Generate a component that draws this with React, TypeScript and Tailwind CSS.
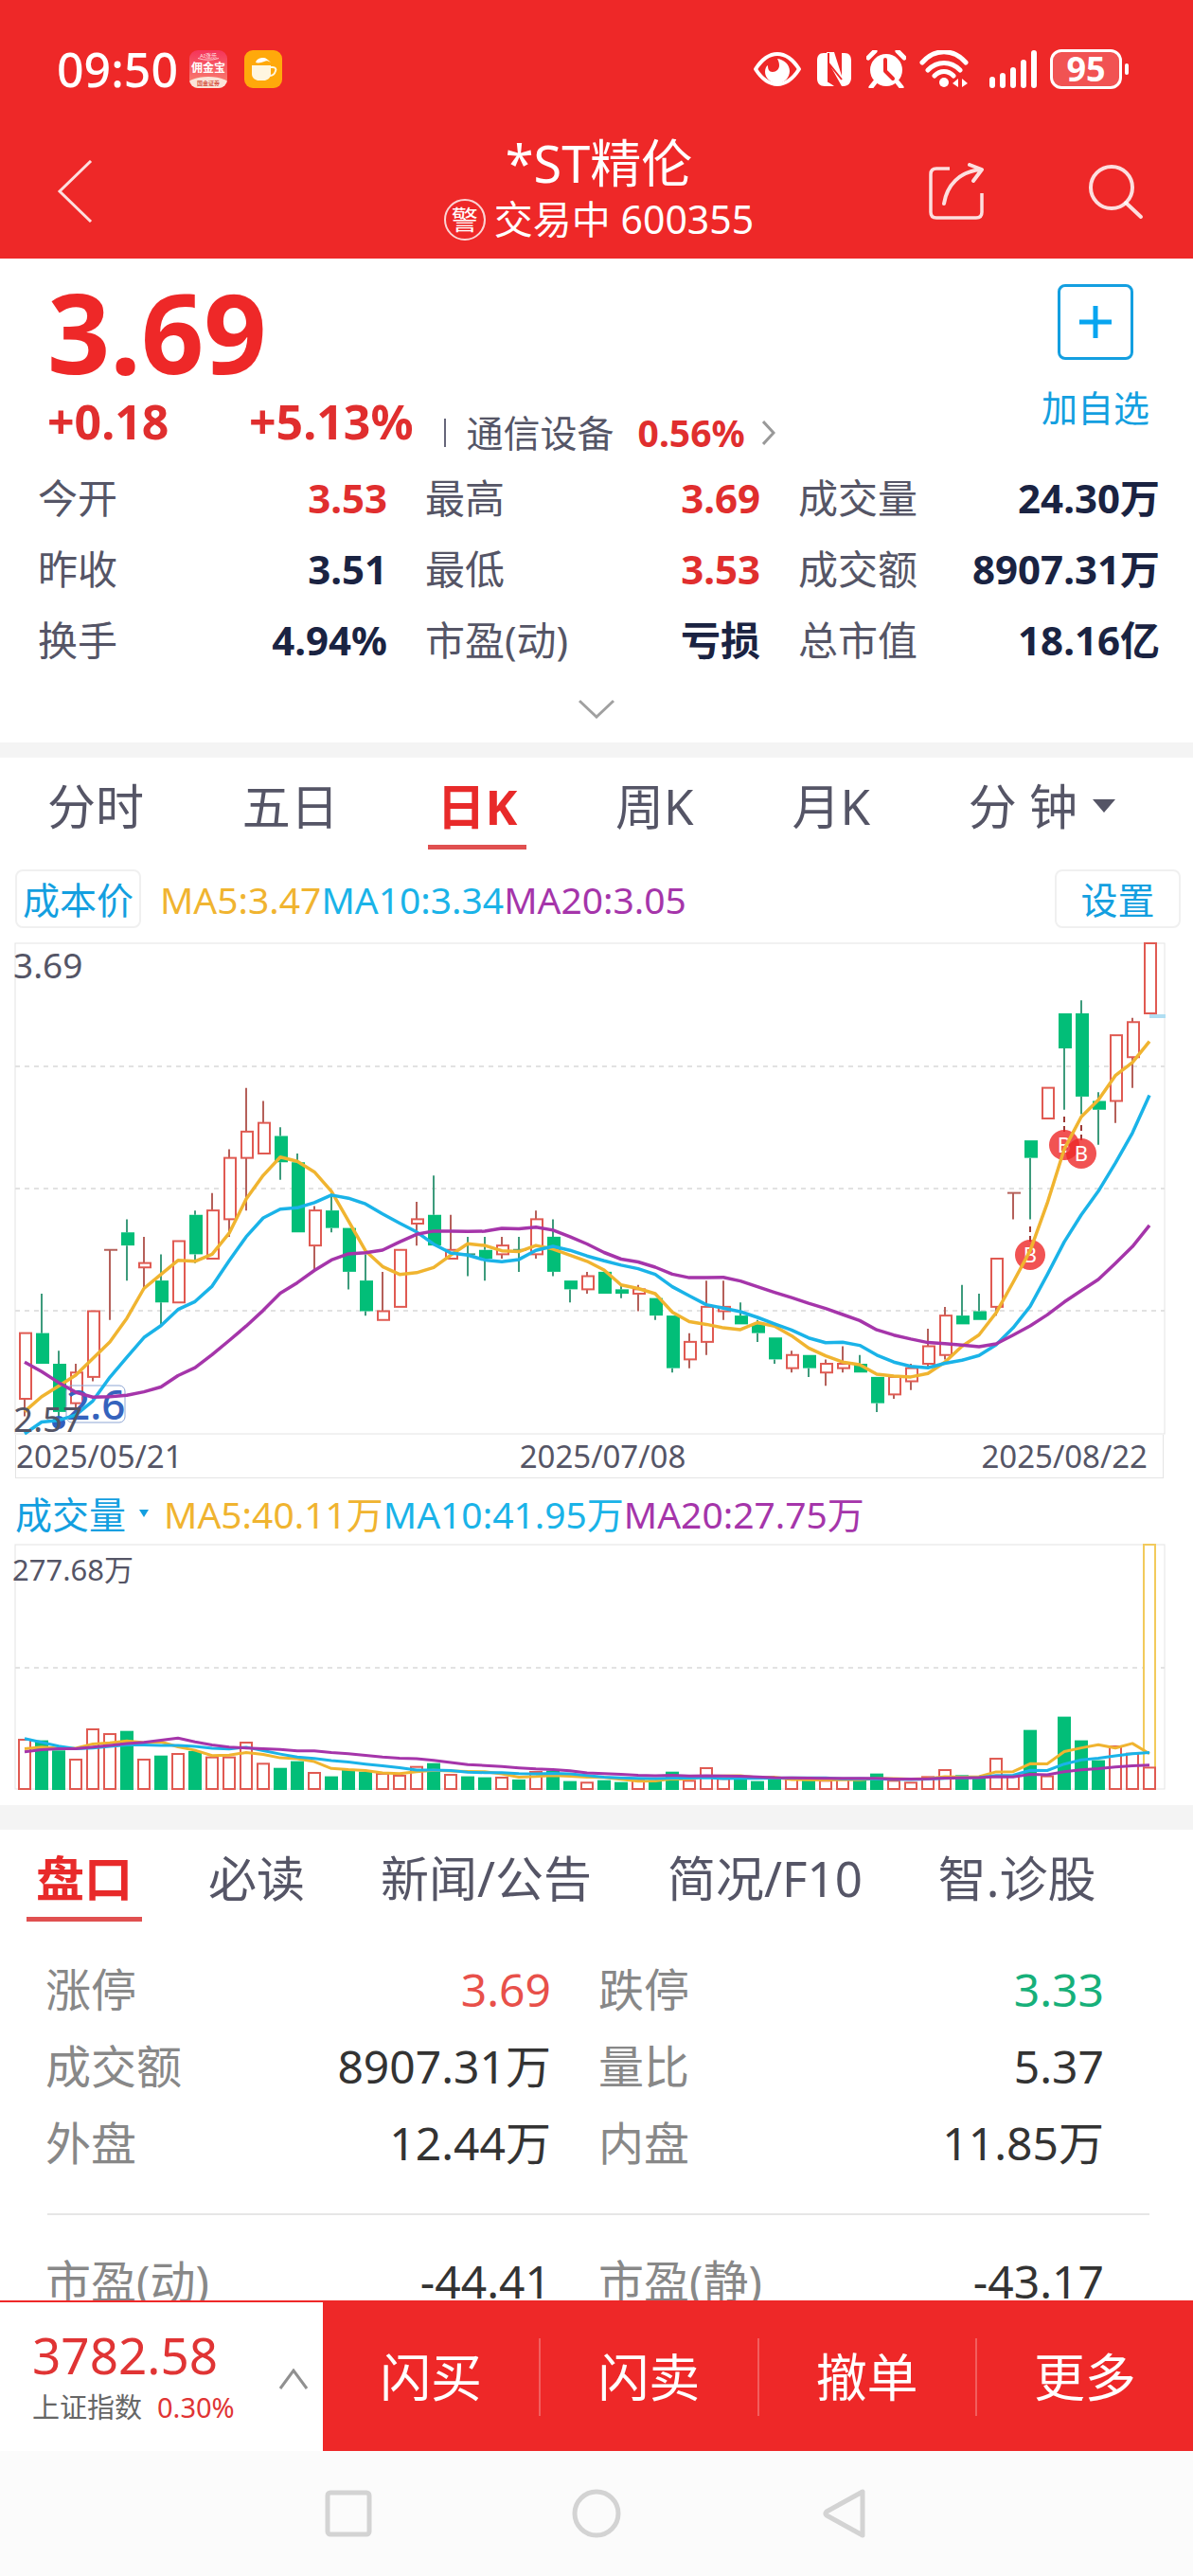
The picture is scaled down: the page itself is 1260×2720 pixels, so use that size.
import { useState } from 'react';
import clsx from 'clsx';

// [open, high, low, close, volume], prices in cents, volume in 万手
type Candle = [number, number, number, number, number];

const CANDLES: Candle[] = [
  [265, 280, 261, 280, 56.0], [280, 289, 273, 273, 55.3], [273, 276, 260, 262, 43.8],
  [264, 273, 263, 271, 33.4], [270, 285, 269, 285, 67.8], [299, 299, 283, 299, 62.4],
  [303, 306, 292, 300, 66.0], [295, 302, 290, 296, 33.4], [292, 298, 282, 287, 38.0],
  [287, 301, 287, 301, 39.8], [307, 308, 296, 298, 43.1], [297, 312, 297, 308, 35.9],
  [306, 322, 302, 320, 35.9], [320, 336, 308, 326, 52.7], [321, 333, 321, 328, 28.7],
  [325, 327, 315, 319, 24.0], [319, 321, 303, 303, 31.6], [300, 309, 294, 308, 18.3],
  [308, 312, 303, 304, 14.4], [304, 304, 290, 294, 21.5], [292, 298, 284, 285, 19.7],
  [283, 294, 283, 285, 17.2], [286, 299, 286, 299, 15.1], [305, 310, 300, 306, 25.1],
  [307, 316, 300, 300, 29.4], [297, 307, 297, 299, 16.1], [298, 302, 293, 298, 14.4],
  [299, 302, 292, 297, 13.3], [298, 302, 297, 300, 12.9], [299, 302, 294, 299, 10.8],
  [298, 308, 297, 306, 19.4], [302, 306, 293, 294, 20.8], [292, 292, 287, 290, 9.0],
  [290, 294, 289, 293, 7.2], [294, 294, 289, 289, 10.0], [290, 291, 288, 289, 7.9],
  [289, 291, 285, 290, 10.0], [288, 288, 283, 284, 10.0], [284, 284, 271, 272, 19.7],
  [274, 280, 272, 278, 9.3], [278, 292, 275, 286, 23.7], [285, 292, 283, 286, 11.5],
  [284, 287, 282, 282, 10.8], [282, 283, 278, 280, 9.0], [279, 279, 273, 274, 11.5],
  [272, 276, 271, 275, 10.8], [275, 275, 270, 272, 10.0], [271, 274, 268, 273, 9.3],
  [272, 277, 271, 273, 10.8], [273, 275, 271, 271, 11.5], [270, 270, 262, 264, 17.6],
  [266, 270, 265, 270, 9.3], [269, 273, 267, 272, 7.2], [273, 281, 272, 277, 13.6],
  [275, 286, 274, 284, 21.5], [284, 291, 282, 282, 15.8], [285, 289, 283, 283, 12.2],
  [286, 297, 284, 297, 34.4], [312, 312, 306, 312, 14.4], [324, 324, 306, 320, 67.1],
  [329, 336, 329, 336, 14.4], [353, 353, 331, 345, 82.2], [353, 356, 330, 334, 55.3],
  [333, 335, 323, 331, 32.7], [333, 348, 328, 348, 48.4], [343, 352, 336, 351, 40.2],
  [353, 369, 353, 369, 24.3],
];

// averages for the first days, whose history lies before the visible window
const PRICE_SEED: Record<number, number[]> = {
  5: [262.1, 265.5, 267.9, 270.4],
  10: [257, 259.7, 260.1, 261.3, 264.5, 269.9, 274.5, 279, 281.7],
  20: [273.4, 271.2, 268.7, 266.5, 265.4, 265.5, 265.8, 266.6, 267.7, 270.3, 272.1, 275.1, 278.3, 281.6, 285.2, 289.1, 291.5, 294.3, 296.7],
};
const VOLUME_SEED: Record<number, number[]> = {
  5: [45.9, 47.7, 46.3, 46.3],
  10: [57.4, 53.1, 48.8, 45.9, 46.6, 48.4, 50.2, 50.2, 49.5],
  20: [42.3, 44.8, 45.9, 45.9, 47.7, 49.5, 51.7, 53.1, 55.3, 57.8, 53.5, 49.9, 47.7, 46.6, 45.9, 44.9, 43.4, 43.4, 41.3],
};

const LINES = [
  { period: 5, color: '#f0b430' },
  { period: 10, color: '#1ab3e8' },
  { period: 20, color: '#a535aa' },
];

const UP = '#e05a52';
const DOWN = '#02be78';

const barX = (i: number) => 26 + i * 18;

function isUp(i: number) {
  const [open, , , close] = CANDLES[i];
  if (open !== close) return close > open;
  return i === 0 || close >= CANDLES[i - 1][3];
}

function average(values: number[], seed: number[], period: number) {
  return values.map((_, i) => {
    if (i < period - 1) return seed[i];
    return values.slice(i - period + 1, i + 1).reduce((a, b) => a + b, 0) / period;
  });
}

const toPoints = (values: number[], y: (v: number) => number) =>
  values.map((v, i) => `${barX(i)},${y(v).toFixed(1)}`).join(' ');

function BuyMark({ index, cy }: { index: number; cy: number }) {
  const x = barX(index);
  return (
    <g>
      <line x1={x} x2={x} y1={cy - 30} y2={cy - 14} stroke="#9c3a36" strokeWidth="2" strokeDasharray="6 4" />
      <circle cx={x} cy={cy} r="16" fill="#ee2828" fillOpacity="0.8" />
      <text x={x} y={cy + 8} fontSize="22" fill="#fff" textAnchor="middle">B</text>
    </g>
  );
}

function PriceChart() {
  const y = (cents: number) => 6 + (369 - cents) * 4.625;
  const closes = CANDLES.map(c => c[3]);

  return (
    <svg viewBox="0 0 1260 525" className="mt-[10px] block w-full" role="img" aria-label="日K线图">
      <rect x="16" y="6" width="1214" height="518" fill="none" stroke="#e4e4e4" strokeWidth="1" />
      {[136, 265, 394].map(gy => (
        <line key={gy} x1="16" x2="1230" y1={gy} y2={gy} stroke="#e2e2e2" strokeWidth="2" strokeDasharray="5 5" />
      ))}
      <line x1="1214" x2="1231" y1="83" y2="83" stroke="#b0def2" strokeWidth="4" />

      {CANDLES.map(([open, high, low, close], i) => {
        const x = barX(i);
        const top = y(Math.max(open, close));
        const bottom = y(Math.min(open, close));
        const up = isUp(i);
        const wick = up ? '#b5605a' : '#3d9b7c';
        return (
          <g key={i}>
            <line x1={x} x2={x} y1={y(high)} y2={top} stroke={wick} strokeWidth="2" />
            <line x1={x} x2={x} y1={bottom} y2={y(low)} stroke={wick} strokeWidth="2" />
            {open === close ? (
              <line x1={x - 6} x2={x + 8} y1={top} y2={top} stroke={wick} strokeWidth="2" />
            ) : up ? (
              <rect x={x - 5} y={top} width="12" height={bottom - top} fill="#fff" stroke={UP} strokeWidth="2" />
            ) : (
              <rect x={x - 6} y={top} width="14" height={bottom - top} fill={DOWN} />
            )}
          </g>
        );
      })}

      <BuyMark index={59} cy={335} />
      <BuyMark index={61} cy={219} />
      <BuyMark index={62} cy={228} />

      <circle cx="62" cy="512" r="7" fill="#2e5fc0" />
      <rect x="70" y="473" width="62" height="39" rx="6" fill="none" stroke="#8ea6d4" strokeWidth="1" />
      <text x="70" y="509" fontSize="44" fontWeight="500" fill="#3563bd">2.6</text>

      {LINES.map(({ period, color }) => (
        <polyline
          key={period}
          points={toPoints(average(closes, PRICE_SEED[period], period), y)}
          fill="none" stroke={color} strokeWidth="3.500" strokeLinejoin="round"
        />
      ))}

      <text x="14" y="43" fontSize="37" fill="#555566">3.69</text>
      <text x="14" y="522" fontSize="37" fill="#555566">2.57</text>
    </svg>
  );
}

function VolumeChart() {
  const base = 262;
  const y = (v: number) => base - (v / 277.68) * 258;
  const volumes = CANDLES.map(c => c[4]);
  const lastX = barX(CANDLES.length - 1);

  return (
    <svg viewBox="0 0 1260 264" className="block w-full" role="img" aria-label="成交量图">
      <rect x="16" y="4" width="1214" height="258" fill="none" stroke="#e4e4e4" strokeWidth="1" />
      <line x1="16" x2="1230" y1="134" y2="134" stroke="#e2e2e2" strokeWidth="2" strokeDasharray="5 5" />
      <rect x={lastX - 6} y="4" width="12" height="258" fill="#fff" stroke="#f2ca5c" strokeWidth="2" />
      {volumes.map((v, i) => (
        isUp(i)
          ? <rect key={i} x={barX(i) - 6} y={y(v)} width="12" height={base - y(v)} fill="#fff" stroke={UP} strokeWidth="2" />
          : <rect key={i} x={barX(i) - 7} y={y(v)} width="14" height={base - y(v) + 1} fill={DOWN} />
      ))}
      {LINES.map(({ period, color }) => (
        <polyline
          key={period}
          points={toPoints(average(volumes, VOLUME_SEED[period], period), y)}
          fill="none" stroke={color} strokeWidth="3" strokeLinejoin="round"
        />
      ))}
      <text x="13" y="42" fontSize="31" fill="#555566">277.68万</text>
    </svg>
  );
}

function StatusBar() {
  return (
    <div className="flex h-[142px] items-center pl-[60px] pr-[68px] pt-1">
      <span className="w-[140px] text-[50px] font-medium leading-none">09:50</span>
      <svg viewBox="0 0 40 40" className="size-10">
        <defs>
          <linearGradient id="promo" x1="0" y1="0" x2="0" y2="1">
            <stop offset="0" stopColor="#f5345a" />
            <stop offset="1" stopColor="#f98a72" />
          </linearGradient>
          <clipPath id="promo-clip"><rect width="40" height="40" rx="9" /></clipPath>
        </defs>
        <g clipPath="url(#promo-clip)">
          <rect width="40" height="40" fill="url(#promo)" />
          <ellipse cx="20" cy="38" rx="24" ry="10" fill="#fbe4d8" />
          <path d="M9 8.500Q20 12 31 8.500" fill="none" stroke="#ffc7cf" strokeWidth="1" />
          <text x="20" y="8" fontSize="6" fill="#ffe1e6" textAnchor="middle">AI涨乐</text>
          <text x="20" y="23" fontSize="12" fill="#fff" textAnchor="middle" fontWeight="bold">佣金宝</text>
          <text x="20" y="37" fontSize="6" fill="#d65a4a" textAnchor="middle" fontWeight="bold">国金证券</text>
        </g>
      </svg>
      <svg viewBox="0 0 40 40" className="ml-[18px] size-10">
        <rect width="40" height="40" rx="9" fill="#ffa90b" />
        <path d="M12 13c1-4 5-5 8-5 3 0 5 2 8 5-3-2-5-2-7-1-3 1-6 2-9 1z" fill="#fff" />
        <path d="M8 16h20v9c0 4-3 6-6 7h-8c-3-1-6-3-6-7z" fill="#fff6e0" />
        <path d="M27 18h3c3 0 4 2 3 4-1 3-3 5-6 5" fill="none" stroke="#fff6e0" strokeWidth="2" />
      </svg>

      <div className="ml-auto flex items-center">
        <svg viewBox="0 0 52 40" className="h-10 w-[52px]">
          <path d="M3 20C10 9 18 4 26 4s16 5 23 16c-7 11-15 16-23 16S10 31 3 20z" fill="none" stroke="#fff" strokeWidth="4" strokeLinejoin="round" />
          <path d="M26 9c7 1 13 6 13 13 0 7-6 13-13 13s-13-6-13-12c0-3 1-6 3-7 0 4 1 7 5 7s7-3 7-7c0-3-1-5-2-7z" fill="#fff" />
        </svg>
        <svg viewBox="0 0 36 38" className="ml-4 h-[38px] w-9">
          <path d="M7 2h4v30l7 5H8c-5 0-8-3-8-8V10c0-5 2-8 7-8z" fill="#fff" />
          <path d="M10 1h8l8 25V2h3c5 0 7 3 7 8v18c0 5-3 9-8 9h-2L12 12z" fill="#fff" />
          <path d="M12 2v30l2 1V15l12 15" fill="none" stroke="#ee2828" strokeWidth="2" />
        </svg>
        <svg viewBox="0 0 42 40" className="ml-4 h-10 w-[42px]">
          <circle cx="21" cy="21" r="17" fill="#fff" />
          <path d="M2 8l7-7M40 8l-7-7M9 34l-4 5M33 34l4 5" stroke="#fff" strokeWidth="5" strokeLinecap="round" />
          <path d="M20 10v12l8 8" fill="none" stroke="#ee2828" strokeWidth="4" strokeLinecap="round" strokeLinejoin="round" />
        </svg>
        <svg viewBox="0 0 52 40" className="ml-[14px] h-10 w-[52px]">
          <path d="M3 13C16-2 36-2 49 13M9 21c10-10 24-10 34 0M16 27c6-6 14-6 20 0" fill="none" stroke="#fff" strokeWidth="5" strokeLinecap="round" />
          <circle cx="26" cy="34" r="5" fill="#fff" />
          <path d="M41 30v9l-6-4zM45 39v-9l6 5z" fill="#fff" />
        </svg>
        <svg viewBox="0 0 50 40" className="ml-[22px] h-10 w-[50px]">
          <path d="M3 31v6M14 27v10M25 21v16M36 13v24M47 3v34" stroke="#fff" strokeWidth="6" strokeLinecap="round" />
        </svg>
        <div className="ml-[14px] flex h-[42px] w-[76px] items-center justify-center rounded-xl border-[3px] border-white bg-white/20 text-[36px] font-bold leading-none">95</div>
        <span className="ml-[3px] h-3 w-1 rounded-full bg-white" />
      </div>
    </div>
  );
}

function TitleBar() {
  return (
    <div className="flex h-[131px] items-center justify-between pb-3 pl-[60px] pr-[52px]">
      <button aria-label="返回" className="w-[225px]">
        <svg viewBox="0 0 38 66" className="h-[66px] w-[38px]">
          <path d="M36 1L3 33l33 32" fill="none" stroke="#fff" strokeOpacity="0.85" strokeWidth="3" />
        </svg>
      </button>
      <div className="flex flex-col items-center">
        <h1 className="h-[60px] text-[54px] leading-[60px]">*ST精伦</h1>
        <p className="flex h-[59px] items-center gap-[9px] text-[41px] leading-[59px]">
          <span className="flex size-11 items-center justify-center rounded-full border-2 border-white/80 text-[28px] leading-none">警</span>
          <span>交易中 600355</span>
        </p>
      </div>
      <div className="flex gap-[108px]">
        <button aria-label="分享">
          <svg viewBox="0 0 60 60" className="size-[60px]">
            <path d="M23 6H9c-4 0-6 2-6 6v40c0 4 2 6 6 6h42c4 0 6-2 6-6V32" fill="none" stroke="#fff" strokeOpacity="0.85" strokeWidth="3.500" />
            <path d="M17 43C20 24 33 9 56 7M44 2l13 5-9 12" fill="none" stroke="#fff" strokeOpacity="0.85" strokeWidth="4" strokeLinecap="round" strokeLinejoin="round" />
          </svg>
        </button>
        <button aria-label="搜索">
          <svg viewBox="0 0 60 60" className="size-[60px]">
            <circle cx="26" cy="26" r="22" fill="none" stroke="#fff" strokeOpacity="0.85" strokeWidth="4" />
            <path d="M41 42l16 15" stroke="#fff" strokeOpacity="0.85" strokeWidth="4" strokeLinecap="round" />
          </svg>
        </button>
      </div>
    </div>
  );
}

const STATS = [
  ['今开', '3.53', true], ['最高', '3.69', true], ['成交量', '24.30万', false],
  ['昨收', '3.51', false], ['最低', '3.53', true], ['成交额', '8907.31万', false],
  ['换手', '4.94%', false], ['市盈(动)', '亏损', false], ['总市值', '18.16亿', false],
] as const;

function Quote() {
  return (
    <section>
      <div className="flex justify-between pl-[50px] pr-[46px] pt-[21px]">
        <div>
          <div className="h-[116px] text-[116px] font-bold leading-[112px] text-[#ee2828]">3.69</div>
          <div className="flex h-[78px] items-center pb-2 text-[50px] font-bold text-[#e02e2e]">
            <span className="w-[213px]">+0.18</span>
            <span>+5.13%</span>
            <a href="#sector" className="ml-8 flex h-full items-center pt-6 text-[39px]">
              <span className="h-[30px] w-[2px] bg-[#66667a]" />
              <span className="ml-[22px] font-normal leading-[44px] text-[#555566]">通信设备</span>
              <span className="ml-[25px] leading-[44px]">0.56%</span>
              <svg viewBox="0 0 14 26" className="ml-[18px] h-[26px] w-[14px]">
                <path d="M1 1l11 12L1 25" fill="none" stroke="#999" strokeWidth="3" />
              </svg>
            </a>
          </div>
        </div>
        <button className="flex flex-col items-center gap-5 pt-[6px] text-[38px] text-[#139fe0]">
          <span className="flex size-20 items-center justify-center rounded-lg border-[3px] border-[#139fe0]">
            <svg viewBox="0 0 34 34" className="size-[34px]">
              <path d="M17 0v34M0 17h34" stroke="#08a5f0" strokeWidth="5" />
            </svg>
          </span>
          <span className="leading-[60px]">加自选</span>
        </button>
      </div>

      <dl className="grid grid-cols-[369fr_354fr_382fr] gap-x-10 pl-10 pr-[35px] text-[42px]">
        {STATS.map(([label, value, up]) => (
          <div key={label} className="flex h-[75px] items-center justify-between">
            <dt className="text-[#555566]">{label}</dt>
            <dd className={clsx('font-bold', up ? 'text-[#e02e2e]' : 'text-[#1a2342]')}>{value}</dd>
          </div>
        ))}
      </dl>
      <button aria-label="展开" className="flex h-[71px] w-full items-center justify-center">
        <svg viewBox="0 0 38 22" className="h-[22px] w-[38px]">
          <path d="M1 2l18 17L37 2" fill="none" stroke="#a0a0a0" strokeWidth="3" />
        </svg>
      </button>
    </section>
  );
}

interface TabProps {
  label: string;
  active: boolean;
  onClick: () => void;
  caret?: boolean;
}

function Tab({ label, active, onClick, caret }: TabProps) {
  return (
    <button
      role="tab"
      aria-selected={active}
      onClick={onClick}
      className={clsx(
        '-mx-[10px] flex h-full items-center border-b-[5px] px-[10px] pt-[10px]',
        active ? 'border-[#e05050] font-bold text-[#e82a2a]' : 'border-transparent text-[#555566]',
      )}
    >
      {label}
      {caret && (
        <svg viewBox="0 0 24 14" className="ml-4 h-[14px] w-6"><path d="M0 0h24L12 14z" fill="#555566" /></svg>
      )}
    </button>
  );
}

const PERIODS = ['分时', '五日', '日K', '周K', '月K', '分 钟'];

function Charts() {
  const [period, setPeriod] = useState('日K');

  return (
    <section className="border-t-[16px] border-[#f4f4f4]">
      <div role="tablist" className="flex h-[97px] justify-between pl-[50px] pr-[82px] text-[51px]">
        {PERIODS.map(p => (
          <Tab key={p} label={p} active={p === period} onClick={() => setPeriod(p)} caret={p === '分 钟'} />
        ))}
      </div>

      <div className="mt-[21px] flex h-[62px] items-center pl-4 pr-[13px] text-[39px]">
        <button className="h-full w-[133px] rounded-lg border-2 border-[#f0f0f0] text-[#139fe0]">成本价</button>
        <span className="ml-5 text-[#f0b430]">MA5:3.47</span>
        <span className="text-[#1ab3e8]">MA10:3.34</span>
        <span className="text-[#a535aa]">MA20:3.05</span>
        <button className="ml-auto h-full w-[133px] rounded-lg border-2 border-[#f0f0f0] text-[#139fe0]">设置</button>
      </div>
      <PriceChart />
      <div className="ml-4 mr-[31px] flex h-[46px] items-center justify-between border border-t-0 border-[#e4e4e4] pr-4 text-[33px] text-[#555566]">
        <span>2025/05/21</span>
        <span className="pl-11">2025/07/08</span>
        <span>2025/08/22</span>
      </div>

      <div className="flex h-[66px] items-center pl-4 pt-2 text-[39px]">
        <button className="flex items-center text-[#139fe0]">
          成交量
          <svg viewBox="0 0 10 8" className="ml-[14px] h-2 w-[10px]"><path d="M0 0h10L5 8z" fill="#139fe0" /></svg>
        </button>
        <span className="ml-4 text-[#f0b430]">MA5:40.11万</span>
        <span className="text-[#1ab3e8]">MA10:41.95万</span>
        <span className="text-[#a535aa]">MA20:27.75万</span>
      </div>
      <VolumeChart />
    </section>
  );
}

const DETAIL_TABS = ['盘口', '必读', '新闻/公告', '简况/F10', '智.诊股'];

const DETAILS = [
  ['涨停', '3.69', 'text-[#e8504a]'], ['跌停', '3.33', 'text-[#17b07a]'],
  ['成交额', '8907.31万', ''], ['量比', '5.37', ''],
  ['外盘', '12.44万', ''], ['内盘', '11.85万', ''],
];

const VALUATION = [
  ['市盈(动)', '-44.41', ''], ['市盈(静)', '-43.17', ''],
];

function DetailGrid({ rows, className }: { rows: string[][]; className: string }) {
  return (
    <dl className={clsx('grid grid-cols-2 gap-x-[50px] pl-12 pr-[94px] text-[48px]', className)}>
      {rows.map(([label, value, color]) => (
        <div key={label} className="flex h-[81px] items-center justify-between">
          <dt className="text-[#888]">{label}</dt>
          <dd className={color || 'text-[#333]'}>{value}</dd>
        </div>
      ))}
    </dl>
  );
}

function Details() {
  const [tab, setTab] = useState('盘口');

  return (
    <section className="mt-[15px] border-t-[26px] border-[#f4f4f4]">
      <div role="tablist" className="flex h-[97px] gap-20 pl-[38px] text-[51px]">
        {DETAIL_TABS.map(t => (
          <Tab key={t} label={t} active={t === tab} onClick={() => setTab(t)} />
        ))}
      </div>
      <DetailGrid rows={DETAILS} className="pt-[31px]" />
      <hr className="ml-[50px] mr-[46px] mt-[34px] border-t-2 border-[#e6e6e6]" />
      <DetailGrid rows={VALUATION} className="pt-[29px]" />
    </section>
  );
}

const ACTIONS = ['闪买', '闪卖', '撤单', '更多'];

function TradeBar() {
  return (
    <div className="flex h-[159px] border-t-2 border-[#ee2828]">
      <button className="flex w-[341px] items-center justify-between pl-[34px] pr-4 pt-1 text-left text-[#e03434]">
        <span>
          <span className="block text-[53px] leading-[60px]">3782.58</span>
          <span className="flex items-center gap-4 text-[29px] leading-[50px]">
            <span className="text-[#666]">上证指数</span>
            <span>0.30%</span>
          </span>
        </span>
        <svg viewBox="0 0 30 22" className="h-[22px] w-[30px]">
          <path d="M1 21L15 2l14 19" fill="none" stroke="#909090" strokeWidth="3" />
        </svg>
      </button>
      <div className="flex flex-1 items-center bg-[#ee2828]">
        {ACTIONS.map((action, i) => (
          <button
            key={action}
            className={clsx('h-[82px] flex-1 text-[54px] leading-none text-white', i > 0 && 'border-l-2 border-white/25')}
          >
            {action}
          </button>
        ))}
      </div>
    </div>
  );
}

function SystemNav() {
  return (
    <nav className="flex h-[132px] items-center justify-center gap-[210px] bg-[#fbfbfb]">
      <button aria-label="最近任务">
        <svg viewBox="0 0 50 54" className="h-[54px] w-[50px]">
          <rect x="3" y="5" width="44" height="44" rx="3" fill="none" stroke="#d3d3d3" strokeWidth="5" />
        </svg>
      </button>
      <button aria-label="主屏幕">
        <svg viewBox="0 0 54 54" className="size-[54px]">
          <circle cx="27" cy="27" r="23" fill="none" stroke="#d3d3d3" strokeWidth="5" />
        </svg>
      </button>
      <button aria-label="返回上一级">
        <svg viewBox="0 0 50 54" className="h-[54px] w-[50px]">
          <path d="M44 4v46L6 29q-2-2 0-4z" fill="none" stroke="#d3d3d3" strokeWidth="5" strokeLinejoin="round" />
        </svg>
      </button>
    </nav>
  );
}

export default function App() {
  return (
    <div className="flex h-screen flex-col whitespace-nowrap bg-white font-['Noto_Sans','Noto_Sans_CJK_SC',sans-serif] leading-none">
      <header className="shrink-0 bg-[#ee2828] text-white">
        <StatusBar />
        <TitleBar />
      </header>
      <main className="min-h-0 flex-1 overflow-y-auto [scrollbar-width:none]">
        <Quote />
        <Charts />
        <Details />
      </main>
      <footer className="shrink-0">
        <TradeBar />
        <SystemNav />
      </footer>
    </div>
  );
}
